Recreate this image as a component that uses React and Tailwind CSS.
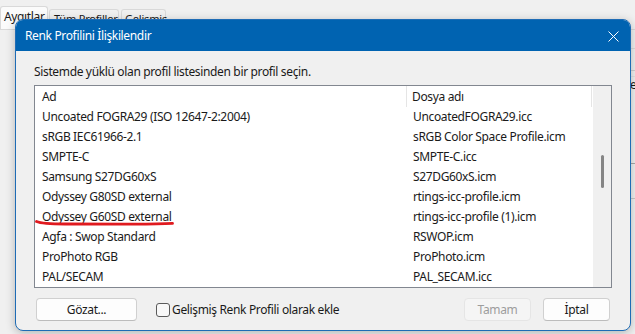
import React from 'react';

const rows = [
  ['Uncoated FOGRA29 (ISO 12647-2:2004)', 'UncoatedFOGRA29.icc'],
  ['sRGB IEC61966-2.1', 'sRGB Color Space Profile.icm'],
  ['SMPTE-C', 'SMPTE-C.icc'],
  ['Samsung S27DG60xS', 'S27DG60xS.icm'],
  ['Odyssey G80SD external', 'rtings-icc-profile.icm'],
  ['Odyssey G60SD external', 'rtings-icc-profile (1).icm'],
  ['Agfa : Swop Standard', 'RSWOP.icm'],
  ['ProPhoto RGB', 'ProPhoto.icm'],
  ['PAL/SECAM', 'PAL_SECAM.icc'],
];

export default function App() {
  return (
    <div className="relative w-[635px] h-[334px] overflow-hidden bg-[#f0f0f0] text-[12px] tracking-[-0.35px] text-[#1a1a1a] font-['Segoe_UI','Noto_Sans',sans-serif]">
      {/* Background window: tabs */}
      <div className="flex items-end pt-[7px] h-[30px] border-b border-[#d9d9d9] whitespace-nowrap">
        <div className="h-[23px] w-[48px] bg-[#fbfbfb] border border-b-0 border-[#d9d9d9] rounded-t-[3px] pl-[3px] leading-[20px]">
          Aygıtlar
        </div>
        <div className="h-[20px] w-[70px] ml-px bg-[#f0f0f0] border border-b-0 border-[#d9d9d9] rounded-t-[3px] pl-[4px] text-[11px] tracking-[-0.2px] leading-[17px]">
          Tüm Profiller
        </div>
        <div className="h-[20px] w-[45px] ml-[2px] bg-[#f0f0f0] border border-b-0 border-[#d9d9d9] rounded-t-[3px] pl-[3px] text-[11px] tracking-[-0.2px] leading-[17px]">
          Gelişmiş
        </div>
      </div>

      {/* Background window: right side remnants */}
      <div className="absolute left-[628px] top-[48px] w-[10px] flex flex-col">
        <div className="h-px bg-[#dcdcdc]" />
        <div className="h-[21px]" />
        <div className="h-px bg-[#d0d0d0]" />
        <div className="h-[5px]" />
        <div className="h-px bg-[#e3e3e3]" />
        <div className="leading-[16px] pl-[2px]">e</div>
        <div className="h-[70px]" />
        <div className="h-px bg-[#a8a8a8]" />
        <div className="h-[34px]" />
        <div className="h-px bg-[#c8c8c8]" />
      </div>

      {/* Dialog */}
      <div className="absolute left-[15px] top-[19px] w-[616px] h-[312px] flex flex-col bg-[#f0f0f0] border border-[#1f6cb5] rounded-[8px] overflow-hidden shadow-[0_2px_10px_rgba(0,0,0,0.25)]">
        {/* Title bar */}
        <div className="h-[31px] shrink-0 bg-[#0063b1] flex items-center justify-between pl-[9px] pr-[11px] text-white">
          <span>Renk Profilini İlişkilendir</span>
          <svg width="11" height="11" viewBox="0 0 11 11" className="mt-px">
            <path d="M0.5 0.5 L10.5 10.5 M10.5 0.5 L0.5 10.5" stroke="white" strokeWidth="1" fill="none" />
          </svg>
        </div>

        {/* Body */}
        <div className="flex flex-col px-[18px] pt-[13px]">
          <div className="leading-[16px]">Sistemde yüklü olan profil listesinden bir profil seçin.</div>

          {/* List view */}
          <div className="relative mt-[5px] h-[203px] border border-[#828790] bg-white flex overflow-hidden">
            <div className="flex-1 flex flex-col">
              <div className="h-[21px] shrink-0 flex">
                <div className="w-[372px] pl-[7px] leading-[21px] border-r border-[#e5e5e5]">Ad</div>
                <div className="w-[185px] pl-[5px] leading-[21px] border-r border-[#e5e5e5]">Dosya adı</div>
              </div>
              {rows.map(([name, file]) => (
                <div key={name} className="h-[20px] shrink-0 flex leading-[20px] whitespace-nowrap">
                  <div className="w-[372px] pl-[7px]">{name}</div>
                  <div className="w-[185px] pl-[6px]">{file}</div>
                </div>
              ))}
            </div>
            {/* Scrollbar */}
            <div className="w-[18px] shrink-0 bg-[#f0f0f0] relative">
              <div className="absolute left-[8px] top-[69px] w-[3px] h-[33px] rounded-full bg-[#858585]" />
            </div>

            {/* Red hand-drawn underline */}
            <svg className="absolute left-0 top-0 pointer-events-none" width="200" height="203">
              <path
                d="M1.5 135.5 C6 137.5 12 138 30 138 L90 138.2 C110 138.3 125 138.2 137.5 137.4"
                stroke="#e01a1f"
                strokeWidth="2.8"
                strokeLinecap="round"
                fill="none"
              />
            </svg>
          </div>

          {/* Buttons */}
          <div className="flex items-center mt-[10px]">
            <button className="ml-[2px] w-[101px] h-[23px] rounded-[4px] border border-[#d0d0d0] border-b-[#bcbcbc] bg-[#fdfdfd]">
              Gözat...
            </button>
            <label className="flex items-center ml-[19px]">
              <span className="w-[14px] h-[14px] rounded-[3px] border border-[#5a5a5a] bg-[#f8f8f8]" />
              <span className="ml-[2px]">Gelişmiş Renk Profili olarak ekle</span>
            </label>
            <button className="ml-auto w-[67px] h-[23px] rounded-[4px] border border-[#e5e5e5] bg-[#f5f5f5] text-[#9d9d9d]">
              Tamam
            </button>
            <button className="ml-[12px] mr-[2px] w-[67px] h-[23px] rounded-[4px] border border-[#d0d0d0] border-b-[#bcbcbc] bg-[#fdfdfd]">
              İptal
            </button>
          </div>
        </div>
      </div>
    </div>
  );
}
